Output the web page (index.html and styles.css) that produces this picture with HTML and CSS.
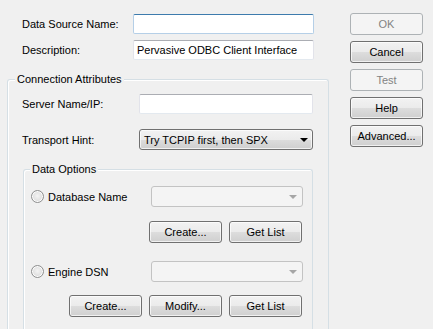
FILE: index.html
```html
<!DOCTYPE html>
<html lang="en">
<head>
    <meta charset="UTF-8">
    <title>ODBC Data Source Setup</title>
    <link rel="stylesheet" href="styles.css">
</head>
<body>
    <div class="dialog">
        <div class="main">
            <div class="row first">
                <span class="label">Data Source Name:</span>
                <div class="textbox focused"></div>
            </div>
            <div class="row">
                <span class="label">Description:</span>
                <div class="textbox">Pervasive ODBC Client Interface</div>
            </div>

            <div class="group outer">
                <div class="group-title">Connection Attributes</div>
                <div class="row server">
                    <span class="label wide">Server Name/IP:</span>
                    <div class="textbox short"></div>
                </div>
                <div class="row transport">
                    <span class="label wide">Transport Hint:</span>
                    <div class="combo">
                        <span>Try TCPIP first, then SPX</span>
                        <span class="arrow"></span>
                    </div>
                </div>

                <div class="group inner">
                    <div class="group-title">Data Options</div>
                    <div class="option db">
                        <span class="radio"></span>
                        <span class="option-label">Database Name</span>
                        <div class="combo disabled"><span class="arrow"></span></div>
                    </div>
                    <div class="buttons db-buttons">
                        <button class="btn">Create...</button>
                        <button class="btn">Get List</button>
                    </div>
                    <div class="option engine">
                        <span class="radio"></span>
                        <span class="option-label">Engine DSN</span>
                        <div class="combo disabled"><span class="arrow"></span></div>
                    </div>
                    <div class="buttons engine-buttons">
                        <button class="btn">Create...</button>
                        <button class="btn">Modify...</button>
                        <button class="btn">Get List</button>
                    </div>
                </div>
            </div>
        </div>

        <div class="side">
            <button class="btn" disabled>OK</button>
            <button class="btn">Cancel</button>
            <button class="btn" disabled>Test</button>
            <button class="btn">Help</button>
            <button class="btn">Advanced...</button>
        </div>
    </div>
</body>
</html>
```

FILE: styles.css
```css
body {
    margin: 0;
    height: 329px;
    overflow: hidden;
    background-color: #f0f0f0;
    font-family: "Liberation Sans", Arial, sans-serif;
    font-size: 11px;
    color: #000;
}

.dialog {
    display: flex;
    padding: 13px 0 0 7px;
}

.main {
    width: 322px;
    padding-top: 1px;
}

.row {
    display: flex;
    align-items: center;
    height: 20px;
    padding-left: 15px;
    margin-top: 6px;
}

.row.first {
    margin-top: 0;
}

.label {
    width: 111px;
    flex-shrink: 0;
}

.label.wide {
    width: 117px;
}

.textbox {
    box-sizing: border-box;
    width: 181px;
    height: 20px;
    padding: 3px 0 0 3px;
    background: #fff;
    border: 1px solid #e2e3ea;
    border-top-color: #abadb3;
    border-bottom-color: #e3e9ef;
    border-radius: 2px;
    white-space: nowrap;
}

.textbox.focused {
    border-color: #b5cfe7;
    border-top-color: #3d7bad;
}

.textbox.short {
    width: 174px;
}

/* group boxes (they run on past the bottom of the dialog) */
.group {
    border: 1px solid #d5dfe5;
    border-bottom: none;
    border-radius: 3px 3px 0 0;
    box-shadow: inset 1px 1px 0 #fff;
}

.group.outer {
    margin-top: 19px;
    height: 249px;
}

.group.inner {
    margin: 19px 0 0 15px;
    width: 288px;
    height: 159px;
}

.group-title {
    width: fit-content;
    margin: -7px 0 0 7px;
    padding: 0 2px;
    line-height: 13px;
    background: #f0f0f0;
}

.inner .group-title {
    margin-left: 6px;
}

.row.server {
    padding-left: 14px;
    margin-top: 8px;
}

.row.transport {
    padding-left: 14px;
    margin-top: 15px;
    height: 21px;
}

/* combo boxes */
.combo {
    box-sizing: border-box;
    display: flex;
    align-items: center;
    justify-content: space-between;
    width: 174px;
    height: 21px;
    padding: 0 4px;
    border: 1px solid #707070;
    border-radius: 3px;
    background: linear-gradient(#f2f2f2 0%, #ebebeb 50%, #dddddd 51%, #cfcfcf 100%);
    box-shadow: inset 0 0 0 1px rgba(255, 255, 255, 0.7);
}

.arrow {
    width: 0;
    height: 0;
    margin-left: auto;
    border-left: 4px solid transparent;
    border-right: 4px solid transparent;
    border-top: 4px solid #000;
}

.combo.disabled {
    width: 152px;
    margin-left: auto;
    background: #f4f4f4;
    border-color: #c3c3c3;
    box-shadow: none;
}

.combo.disabled .arrow {
    border-top-color: #a6a6a6;
    margin-right: 1px;
}

/* radio options */
.option {
    display: flex;
    align-items: center;
    height: 21px;
    padding: 0 9px 0 7px;
}

.option.db {
    margin-top: 10px;
}

.option.engine {
    margin-top: 18px;
}

.radio {
    box-sizing: border-box;
    width: 13px;
    height: 13px;
    border: 1px solid #8e8f8f;
    border-radius: 50%;
    background: radial-gradient(circle at 50% 45%, #f4f4f4 0%, #e1e1e1 55%, #cfcfcf 100%);
    box-shadow: inset 0 0 0 1px #fdfdfd;
}

.option-label {
    margin-left: 4px;
}

/* buttons */
.buttons {
    display: flex;
    justify-content: flex-end;
    gap: 7px;
    padding-right: 10px;
}

.db-buttons {
    margin-top: 14px;
}

.engine-buttons {
    margin-top: 13px;
}

.btn {
    box-sizing: border-box;
    width: 73px;
    height: 22px;
    padding: 0;
    border: 1px solid #707070;
    border-radius: 3px;
    background: linear-gradient(#f2f2f2 0%, #ebebeb 50%, #dddddd 51%, #cfcfcf 100%);
    box-shadow: inset 0 0 0 1px rgba(255, 255, 255, 0.7);
    font-family: inherit;
    font-size: 11px;
    color: #000;
}

.btn:disabled {
    border-color: #adb2b5;
    background: #f4f4f4;
    box-shadow: none;
    color: #838383;
}

.side {
    display: flex;
    flex-direction: column;
    gap: 6px;
    margin-left: 21px;
}
```
